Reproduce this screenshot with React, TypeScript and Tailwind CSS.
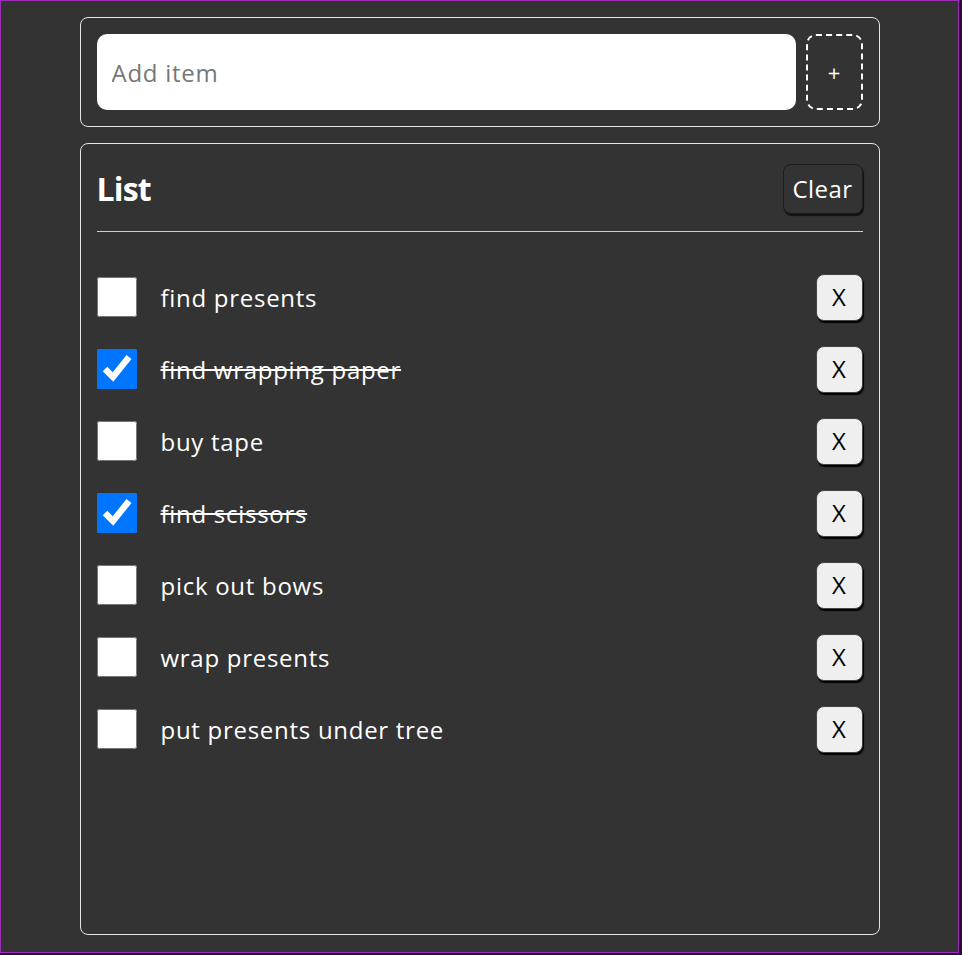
import { useState } from "react";

type Item = {
  id: number;
  text: string;
  done: boolean;
};

const initialItems: Item[] = [
  { id: 1, text: "find presents", done: false },
  { id: 2, text: "find wrapping paper", done: true },
  { id: 3, text: "buy tape", done: false },
  { id: 4, text: "find scissors", done: true },
  { id: 5, text: "pick out bows", done: false },
  { id: 6, text: "wrap presents", done: false },
  { id: 7, text: "put presents under tree", done: false },
];

const font = { fontFamily: '"Open Sans", "Noto Sans", sans-serif' };

export default function App() {
  const [items, setItems] = useState<Item[]>(initialItems);
  const [draft, setDraft] = useState("");

  const addItem = () => {
    if (!draft.trim()) return;
    setItems([...items, { id: Date.now(), text: draft.trim(), done: false }]);
    setDraft("");
  };

  return (
    <div className="h-[955px] w-[962px] bg-[#2b0a36]" style={font}>
      <div className="h-[953px] w-[959px] border border-[#9a2fb5] bg-[#333333] pt-4">
        {/* add item */}
        <div className="mx-auto flex w-[800px] gap-[10px] rounded-lg border border-[#e5e5e5] p-4">
          <input
            value={draft}
            onChange={(e) => setDraft(e.target.value)}
            placeholder="Add item"
            className="h-[76px] flex-1 rounded-[10px] bg-white px-[15px] text-[24px] tracking-[0.03em] text-black outline-none placeholder:text-[#777]"
          />
          <button
            onClick={addItem}
            className="flex h-[76px] w-[57px] shrink-0 items-center justify-center rounded-[10px] border-2 border-dashed border-white text-[22px] text-white"
          >
            +
          </button>
        </div>

        {/* list */}
        <div className="mx-auto mt-4 h-[792px] w-[800px] rounded-lg border border-[#e5e5e5] p-4">
          <div className="flex items-center justify-between border-b border-[#cfcfcf] pb-[17px] pt-1">
            <h1 className="text-[32px] font-bold tracking-tight text-white">List</h1>
            <button
              onClick={() => setItems([])}
              className="h-[50px] w-[80px] shrink-0 rounded-lg border border-[#1c1c1c] bg-[#333333] text-[24px] tracking-[0.02em] text-white shadow-[1px_2px_1px_#111]"
            >
              Clear
            </button>
          </div>

          <ul className="mt-[29px]">
            {items.map((item) => (
              <li key={item.id} className="flex h-[72px] items-center">
                <input
                  type="checkbox"
                  checked={item.done}
                  onChange={() =>
                    setItems(items.map((i) => (i.id === item.id ? { ...i, done: !i.done } : i)))
                  }
                  className="m-0 h-10 w-10 shrink-0"
                />
                <span
                  className={`ml-6 flex-1 pt-[2px] text-[24px] tracking-[0.03em] text-white ${item.done ? "line-through" : ""}`}
                >
                  {item.text}
                </span>
                <button
                  onClick={() => setItems(items.filter((i) => i.id !== item.id))}
                  className="h-[47px] w-[47px] shrink-0 rounded-lg border border-[#444] bg-[#efefef] text-[24px] text-black shadow-[1px_2px_1px_#000]"
                >
                  X
                </button>
              </li>
            ))}
          </ul>
        </div>
      </div>
    </div>
  );
}
